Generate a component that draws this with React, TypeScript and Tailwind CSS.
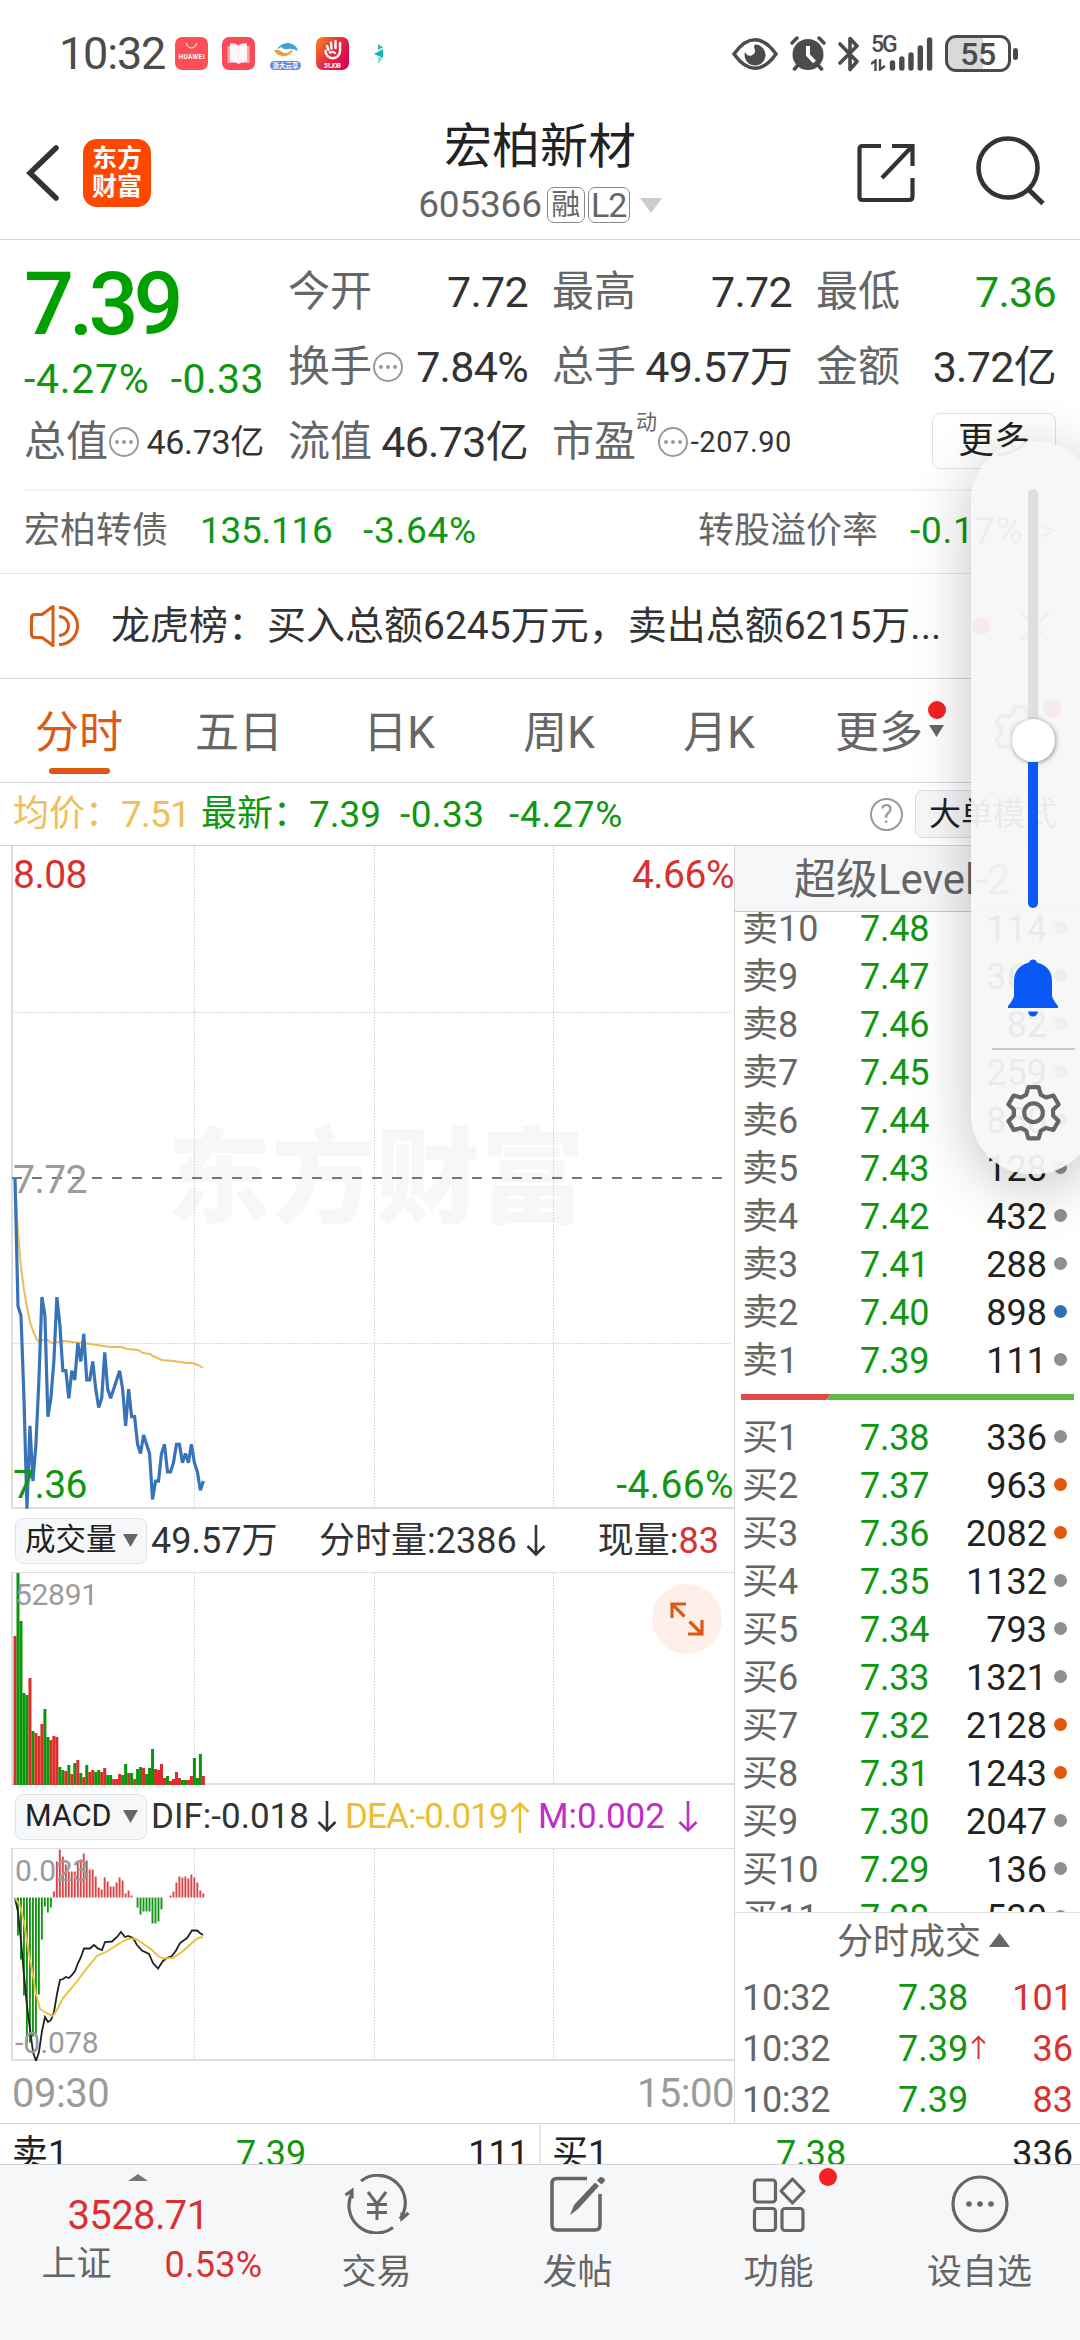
import React from 'react';

type Tone = 'gray' | 'blue' | 'orange';

interface OrderLevel {
  label: string;
  price: string;
  volume: string;
  tone: Tone;
}

const SELL_LEVELS: OrderLevel[] = [
  { label: '卖10', price: '7.48', volume: '114', tone: 'gray' },
  { label: '卖9', price: '7.47', volume: '368', tone: 'blue' },
  { label: '卖8', price: '7.46', volume: '82', tone: 'gray' },
  { label: '卖7', price: '7.45', volume: '259', tone: 'gray' },
  { label: '卖6', price: '7.44', volume: '850', tone: 'blue' },
  { label: '卖5', price: '7.43', volume: '128', tone: 'gray' },
  { label: '卖4', price: '7.42', volume: '432', tone: 'gray' },
  { label: '卖3', price: '7.41', volume: '288', tone: 'gray' },
  { label: '卖2', price: '7.40', volume: '898', tone: 'blue' },
  { label: '卖1', price: '7.39', volume: '111', tone: 'gray' },
];

const BUY_LEVELS: OrderLevel[] = [
  { label: '买1', price: '7.38', volume: '336', tone: 'gray' },
  { label: '买2', price: '7.37', volume: '963', tone: 'orange' },
  { label: '买3', price: '7.36', volume: '2082', tone: 'orange' },
  { label: '买4', price: '7.35', volume: '1132', tone: 'gray' },
  { label: '买5', price: '7.34', volume: '793', tone: 'gray' },
  { label: '买6', price: '7.33', volume: '1321', tone: 'gray' },
  { label: '买7', price: '7.32', volume: '2128', tone: 'orange' },
  { label: '买8', price: '7.31', volume: '1243', tone: 'orange' },
  { label: '买9', price: '7.30', volume: '2047', tone: 'gray' },
  { label: '买10', price: '7.29', volume: '136', tone: 'gray' },
  { label: '买11', price: '7.28', volume: '530', tone: 'gray' },
];

const TRADES = [
  { time: '10:32', price: '7.38', volume: '101', up: false },
  { time: '10:32', price: '7.39', volume: '36', up: true },
  { time: '10:32', price: '7.39', volume: '83', up: false },
];

const DOT: Record<Tone, string> = {
  gray: 'bg-[#8f8e94]',
  blue: 'bg-[#2f6fba]',
  orange: 'bg-[#e2570f]',
};

// one entry per minute since 09:30
const PRICES = [
  7.72, 7.58, 7.57, 7.48, 7.36, 7.45, 7.39, 7.43, 7.5, 7.59, 7.57, 7.46, 7.48, 7.52, 7.59, 7.56,
  7.51, 7.51, 7.48, 7.51, 7.5, 7.54, 7.52, 7.55, 7.5, 7.5, 7.52, 7.49, 7.47, 7.48, 7.53, 7.49,
  7.48, 7.49, 7.5, 7.51, 7.49, 7.45, 7.49, 7.46, 7.46, 7.43, 7.42, 7.44, 7.43, 7.42, 7.37, 7.39,
  7.39, 7.42, 7.43, 7.4, 7.4, 7.41, 7.43, 7.43, 7.41, 7.42, 7.41, 7.43, 7.41, 7.4, 7.38, 7.39,
];

const VOLUMES = [
  149, 212, 164, 92, 90, 107, 54, 52, 49, 61, 76, 48, 45, 49, 48, 18, 15, 14, 20, 11, 22, 25, 12, 8,
  20, 13, 15, 13, 15, 13, 17, 10, 10, 6, 6, 11, 10, 21, 12, 12, 6, 16, 18, 17, 11, 17, 36, 16, 15,
  21, 7, 9, 4, 6, 13, 7, 5, 5, 5, 9, 27, 7, 31, 9,
];
const VOLUME_SIDES = 'RGGGGRGRRRGGRRRGGRGRGRGRGRRGGRRGGRRRGGRGRGGRGGGRRRRGRRRRGGRRGGGR';

const MACD = [
  0, -38, -62, -98, -146, -145, -139, -139, -97, -42, -9, -15, -10, 6, 36, 48, 41, 33, 26, 26, 26,
  35, 38, 44, 37, 28, 28, 21, 10, 8, 20, 16, 11, 11, 15, 20, 17, 4, 7, 2, 0, -10, -17, -14, -14,
  -14, -26, -26, -24, -12, 0, 0, 2, 6, 15, 21, 20, 21, 19, 23, 20, 15, 7, 4,
];

const AVG_POINTS =
  '3,331 6,387 9,421 12,444 15,461 18,476 21,485 24,492 27,496 31,494 34,493 40,497 51,495 71,497 85,499 98,501 110,501 115,503 126,504 131,507 138,508 141,510 150,514 161,515 175,517 180,517 186,519 191,522';
const DIF_POINTS =
  '3,49 6,63 9,92 12,126 15,157 18,180 21,203 24,212 27,203 30,182 33,168 36,173 39,171 42,163 45,145 48,131 51,130 54,128 57,129 60,126 63,122 66,114 69,108 72,99.5 78,99.5 82,96 86,99.5 90,101 93,93 100,92.5 105,88 109,83 113,88 116,87 121,89 125,96 130,101.5 137,105 141,114 146,119.5 151,112 155,109 160,107 164,101.5 168,94 175,89 180,81.5 185,81.5 188,84 191,86';
const DEA_POINTS =
  '3,49 8,57 12,73 15,92 18,111 21,126 24,145 28,160 35,164.5 41,167 46,159 51,149 58,141 66,131 75,119 85,107 95,102.5 108,94 116,90 123,89.5 131,94.5 140,101 146,107 151,109.5 161,109 171,102 181,93 186,89 191,88';

const minuteX = (i: number) => 3 + i * 2.99;

/* ---------- small icons ---------- */

const Caret: React.FC<{ className?: string; up?: boolean }> = ({ className, up }) => (
  <svg viewBox="0 0 14 10" preserveAspectRatio="none" className={className} fill="currentColor">
    <path d={up ? 'M7 0 14 10H0z' : 'M0 0h14L7 10z'} />
  </svg>
);

const Arrow: React.FC<{ className?: string; up?: boolean }> = ({ className = '', up }) => (
  <svg viewBox="0 0 20 32" className={`shrink-0 ${className} ${up ? 'rotate-180' : ''}`} fill="none" stroke="currentColor" strokeWidth="2.6">
    <path d="M10 0v29M1.5 21l8.5 8.5 8.5-8.5" />
  </svg>
);

const MoreDots: React.FC = () => (
  <svg viewBox="0 0 32 32" className="h-8 w-8 shrink-0">
    <circle cx="16" cy="16" r="14" fill="none" stroke="#999" strokeWidth="2" />
    <circle cx="9" cy="16" r="2" fill="#999" />
    <circle cx="16" cy="16" r="2" fill="#999" />
    <circle cx="23" cy="16" r="2" fill="#999" />
  </svg>
);

const GEAR =
  'M22.5 3h10l2 7.2 5 2.8 7.2-1.9 5 8.6-5.3 5.2v5.6l5.3 5.2-5 8.6-7.2-1.9-5 2.8-2 7.2h-10l-2-7.2-5-2.8-7.2 1.9-5-8.6 5.3-5.2v-5.6l-5.3-5.2 5-8.6 7.2 1.9 5-2.8z';

const Gear: React.FC<{ className?: string }> = ({ className }) => (
  <svg viewBox="0 0 55 55" className={className} fill="none" stroke="currentColor" strokeWidth="4" strokeLinejoin="round">
    <path d={GEAR} />
    <circle cx="27.5" cy="27.7" r="9" />
  </svg>
);

/* ---------- status bar ---------- */

const StatusBar: React.FC = () => (
  <div className="flex h-[108px] items-center pl-[59px] text-[#4b4b4b]">
    <span className="w-[116px] text-[45px] leading-none tracking-[-1.2px]">10:32</span>
    <svg viewBox="0 0 33 33" className="h-[33px] w-[33px]">
      <rect width="33" height="33" rx="7" fill="#fc5058" />
      <path d="M11.5 6a5 5 0 0 0 10 0" fill="none" stroke="#fff" strokeWidth="1" />
      <text x="16.5" y="22" fontSize="6.4" fontWeight="700" textAnchor="middle" fill="#fff" textLength="26">HUAWEI</text>
    </svg>
    <svg viewBox="0 0 33 33" className="ml-[14px] h-[33px] w-[33px]">
      <rect width="33" height="33" rx="7" fill="#fb4a56" />
      <path d="M5.5 9H16v17H5.5zM17 9h10.5v17H17z" fill="#fda5ab" />
      <path d="M8 6.500q5-1 8.500 2 3.500-3 8.500-2v18q-5-.5-8.500 2.500-3.500-3-8.500-2.500z" fill="#fff" opacity=".9" />
    </svg>
    <svg viewBox="0 0 33 33" className="ml-[14px] h-[33px] w-[33px]">
      <path d="M8 12Q13 5 20 6q8 2 9 8-6-3-10-2-4 1-7-2-2 2-4 2z" fill="#3ea5d0" />
      <path d="M5 13q5-1 8 2 4 2 7 0 2-2 4-2-3 7-11 6-6-1-8-6z" fill="#e8a33a" />
      <rect x="1" y="24" width="31" height="9" rx="4.5" fill="#5f8be0" />
      <text x="16.5" y="31" fontSize="6.5" fontWeight="700" textAnchor="middle" fill="#fff">浙大云享</text>
    </svg>
    <svg viewBox="0 0 33 33" className="ml-[14px] h-[33px] w-[33px]">
      <defs>
        <linearGradient id="job" x1="0" y1="0" x2="1" y2="0.7">
          <stop offset="0" stopColor="#f58a1f" />
          <stop offset="0.5" stopColor="#e8303c" />
          <stop offset="1" stopColor="#dc0055" />
        </linearGradient>
      </defs>
      <rect width="33" height="33" rx="7" fill="url(#job)" />
      <path d="M9.5 14a7.2 7.2 0 1 0 14.500 0V6M11 9l1.500 4M15 5.500l.5 6M19.500 4v7M14 15.500q3-1.500 5 .5" fill="none" stroke="#fff" strokeWidth="2.4" strokeLinecap="round" />
      <text x="16.5" y="31" fontSize="6.5" fontWeight="700" textAnchor="middle" fill="#fff" textLength="17">51JOB</text>
    </svg>
    <svg viewBox="0 0 10 20" className="ml-[25px] h-5 w-[10px]">
      <path d="M4 0l5 3.5L4 6z" fill="#2bb5b0" />
      <path d="M9 5v9L0 10z" fill="#19b3b3" />
      <path d="M4 12.5l5 2-5 5z" fill="#8ed8d4" />
    </svg>

    <svg viewBox="0 0 46 32" className="ml-[348px] h-8 w-[46px]">
      <path d="M2 16Q12 1.8 23 1.8T44 16Q34 30.2 23 30.2T2 16z" fill="none" stroke="#4b4b4b" strokeWidth="3.5" />
      <path d="M23 6.5a10.5 10.5 0 1 1-10 7.5q2 4.500 6.500 3.500 5-2 3-7-1-2.500.5-4z" fill="#4b4b4b" />
    </svg>
    <svg viewBox="0 0 36 35" className="ml-3 h-[35px] w-9">
      <circle cx="18" cy="18.5" r="15.5" fill="#4b4b4b" />
      <path d="M2 7l5-5M34 7l-5-5M4.500 33l4-4.500M31.500 33l-4-4.500" stroke="#4b4b4b" strokeWidth="3.5" strokeLinecap="round" />
      <path d="M18 10v9l6.500 7" fill="none" stroke="#fff" strokeWidth="4" />
    </svg>
    <svg viewBox="0 0 22 36" className="ml-3 h-9 w-[22px]" fill="none" stroke="#4b4b4b" strokeWidth="3.6" strokeLinecap="round" strokeLinejoin="round">
      <path d="M2 8l17 17.5L12 33.5V2.5l7 7.5L2 27" />
    </svg>
    <div className="ml-[11px] flex h-[35px] w-[64px] items-end">
      <div className="flex w-[18px] flex-col">
        <span className="text-[23px] font-medium leading-[18px] tracking-[-2px]">5G</span>
        <svg viewBox="0 0 15 12" className="mt-[5px] h-3 w-[15px]" fill="none" stroke="#4b4b4b" strokeWidth="2.4">
          <path d="M0 5l4.5-3.5V12M9 0v10.500L14 7" />
        </svg>
      </div>
      <svg viewBox="0 0 46 35" className="h-[35px] w-[46px]" stroke="#4b4b4b" strokeWidth="5.4" strokeLinecap="round">
        <path d="M3.5 27v5M12.8 23v9M22 19v13M31.3 12v20M40.6 4v28" />
      </svg>
    </div>
    <div className="ml-[10px] flex items-center">
      <div className="flex h-[37px] w-[66px] items-center justify-center rounded-[11px] border-[3px] border-[#4b4b4b] bg-linear-to-r from-[#d9d9d9] from-59% to-white to-59% text-[32px] font-medium leading-none tracking-[-0.5px]">
        55
      </div>
      <div className="ml-0.5 h-3 w-[5px] rounded-full bg-[#4b4b4b]" />
    </div>
  </div>
);

/* ---------- title bar ---------- */

const TitleBar: React.FC = () => (
  <header className="flex h-[132px] items-center border-b-[1.5px] border-[#d4d4d4] pb-1">
    <svg viewBox="0 0 34 58" className="ml-[26px] mt-1 h-[58px] w-[34px]" fill="none" stroke="#333" strokeWidth="5.5" strokeLinecap="round">
      <path d="M30 4L4 29l26 25" />
    </svg>
    <div className="ml-[23px] mt-1 flex h-[68px] w-[68px] flex-col items-center justify-center rounded-[14px] bg-[#ff4700] text-[25px] font-bold leading-[28px] text-white">
      <span>东方</span>
      <span>财富</span>
    </div>
    <div className="flex w-[706px] flex-col items-center pl-[72px]">
      <h1 className="text-[48px] leading-[56px] text-[#222]">宏柏新材</h1>
      <div className="mt-[12px] flex items-center text-[#666]">
        <span className="text-[37px] leading-9 tracking-[-0.2px]">605366</span>
        <span className="ml-[5px] flex h-9 w-[38px] items-center justify-center rounded-[7px] border border-[#888] text-[29px] leading-none">融</span>
        <span className="ml-[3px] flex h-9 w-[42px] items-center justify-center rounded-[7px] border border-[#888] text-[34px] leading-none tracking-[-1px]">L2</span>
        <Caret className="ml-[10px] h-[15px] w-[22px] text-[#ccc]" />
      </div>
    </div>
    <svg viewBox="0 0 58 60" className="mt-1 h-[60px] w-[58px] shrink-0" fill="none" stroke="#333" strokeWidth="4.2">
      <path d="M24 3H5.500Q2.500 3 2.500 6v48q0 3 3 3H52q3.500 0 3.500-3.500V35M35 3h20.500v20M55 3.500L25 35" />
    </svg>
    <svg viewBox="0 0 70 70" className="ml-[61px] h-[70px] w-[70px] shrink-0" fill="none" stroke="#333" strokeWidth="4.6">
      <circle cx="32" cy="32" r="29.5" />
      <path d="M53 54l14 13.5" strokeWidth="5" />
    </svg>
  </header>
);

/* ---------- quote ---------- */

const Cell: React.FC<{ label: string; dots?: boolean; children: React.ReactNode }> = ({ label, dots, children }) => (
  <div className="flex h-[75px] items-center justify-between">
    <span className="flex items-center text-[42px] text-[#666]">
      {label}
      {dots && <MoreDots />}
    </span>
    {children}
  </div>
);

const Value: React.FC<{ className?: string; children: React.ReactNode }> = ({ className = 'text-[#333]', children }) => (
  <span className={`whitespace-nowrap text-[43px] tracking-[-0.7px] ${className}`}>{children}</span>
);

const Quote: React.FC = () => (
  <section className="h-[335px] border-b-[1.5px] border-[#e6e6e6]">
    <div className="ml-6 flex h-[251px] gap-6 border-b-2 border-[#f3f3f3] leading-none">
      <div className="w-60 pt-2">
        <div className="flex h-[112px] items-center text-[88px] font-medium tracking-[-5px] text-[#00a000]">7.39</div>
        <div className="flex h-10 items-center justify-between text-[41px] text-[#109610]">
          <span className="tracking-[0.7px]">-4.27%</span>
          <span className="tracking-[0.4px]">-0.33</span>
        </div>
        <div className="flex h-[84px] items-center text-[42px] text-[#666]">
          总值
          <MoreDots />
          <span className="ml-auto text-[34px] tracking-[-0.3px] text-[#333]">46.73亿</span>
        </div>
      </div>
      <div className="w-60 pt-[15px]">
        <Cell label="今开"><Value>7.72</Value></Cell>
        <Cell label="换手" dots><Value>7.84%</Value></Cell>
        <Cell label="流值"><Value>46.73亿</Value></Cell>
      </div>
      <div className="w-60 pt-[15px]">
        <Cell label="最高"><Value>7.72</Value></Cell>
        <Cell label="总手"><Value>49.57万</Value></Cell>
        <div className="flex h-[75px] items-center text-[42px] text-[#666]">
          市盈
          <span className="mb-10 text-[21px]">动</span>
          <MoreDots />
          <span className="ml-auto text-[29px] tracking-[0.6px] text-[#333]">-207.90</span>
        </div>
      </div>
      <div className="w-60 pt-[15px]">
        <Cell label="最低"><Value className="text-[#109610]">7.36</Value></Cell>
        <Cell label="金额"><Value>3.72亿</Value></Cell>
        <div className="flex h-[72px] items-center justify-end">
          <span className="flex h-14 w-[124px] items-center justify-center rounded-lg border-[1.5px] border-[#dfe1e5] text-[36px] text-[#222]">更多</span>
        </div>
      </div>
    </div>
    <div className="flex h-[80px] items-center px-6 text-[36px] leading-none text-[#666]">
      <span>宏柏转债</span>
      <span className="ml-8 w-[163px] text-[37px] tracking-[-0.3px] text-[#109610]">135.116</span>
      <span className="text-[37px] tracking-[0.7px] text-[#109610]">-3.64%</span>
      <span className="ml-auto">转股溢价率</span>
      <span className="ml-8 w-[126px] text-[37px] tracking-[0.7px] text-[#109610]">-0.17%</span>
      <svg viewBox="0 0 20 20" className="h-5 w-5" fill="none" stroke="#888" strokeWidth="2">
        <path d="M2 3l16 7-16 7" />
      </svg>
    </div>
  </section>
);

const Notice: React.FC = () => (
  <section className="flex h-[105px] items-center border-b-[1.5px] border-[#d4d4d4] pl-[29px]">
    <svg viewBox="0 0 52 44" className="h-11 w-[52px]" fill="none" stroke="#dc5a17" strokeWidth="3">
      <path d="M24 2.500v39l-11-8H6Q2.500 33.500 2.500 30V14q0-3.500 3.500-3.500h7z" strokeLinejoin="round" />
      <path d="M30 3.5a18.5 18.5 0 0 1 0 37M30 12.500a9.5 9.5 0 0 1 0 19" />
    </svg>
    <p className="ml-[30px] w-[861px] whitespace-nowrap text-[39px] leading-none text-[#333]">
      龙虎榜：买入总额6245万元，卖出总额6215万...
    </p>
    <span className="h-[18px] w-[18px] rounded-full bg-[#f22222]" />
    <svg viewBox="0 0 30 30" className="ml-[30px] h-[30px] w-[30px]" stroke="#888" strokeWidth="2.5">
      <path d="M1 1l28 28M29 1L1 29" />
    </svg>
  </section>
);

const TABS = ['分时', '五日', '日K', '周K', '月K', '更多'];

const Tabs: React.FC = () => (
  <nav className="-ml-px flex h-[104px] items-center border-b-[1.5px] border-[#d4d4d4] text-[44px] leading-none text-[#666]">
    {TABS.map((tab, i) => (
      <div key={tab} className={`relative flex h-full w-[160px] shrink-0 items-center justify-center pt-1 ${i === 0 ? 'text-[#dc5a17]' : ''}`}>
        {tab}
        {i === 0 && <span className="absolute bottom-2 left-[50px] h-1.5 w-[61px] rounded-full bg-[#e2570f]" />}
        {tab === '更多' && (
          <>
            <span className="absolute right-[13px] top-[22px] h-[18px] w-[18px] rounded-full bg-[#f22222]" />
            <Caret className="absolute right-[15px] top-[46px] h-3 w-[15px]" />
          </>
        )}
      </div>
    ))}
    <div className="relative ml-[34px]">
      <Gear className="h-[54px] w-[54px]" />
      <span className="absolute -right-[14px] -top-1 h-[18px] w-[18px] rounded-full bg-[#f22222]" />
    </div>
  </nav>
);

const InfoRow: React.FC = () => (
  <section className="flex h-[63px] items-center whitespace-nowrap border-b-[1.5px] border-[#d4d4d4] pl-[13px] text-[36px] leading-none">
    <span className="w-[108px] text-[#efbe59]">均价：</span>
    <span className="w-[80px] text-[37px] tracking-[-0.8px] text-[#efbe59]">7.51</span>
    <span className="w-[108px] text-[#109610]">最新：</span>
    <span className="w-[91px] text-[37px] text-[#109610]">7.39</span>
    <span className="w-[109px] text-[37px] tracking-[0.4px] text-[#109610]">-0.33</span>
    <span className="w-[361px] text-[37px] tracking-[0.8px] text-[#109610]">-4.27%</span>
    <span className="flex h-[33px] w-[33px] items-center justify-center rounded-full border-[2.5px] border-[#999] text-[26px] text-[#999]">?</span>
    <span className="ml-3 flex h-12 w-[156px] items-center justify-center rounded-lg border-[1.5px] border-[#dadde2] bg-[#f6f7f9] text-[32px] text-[#222]">大单模式</span>
  </section>
);

/* ---------- charts ---------- */

const GridLines: React.FC<{ height: number; rows?: number[] }> = ({ height, rows = [] }) => (
  <g stroke="#cfcfcf" strokeWidth="1" strokeDasharray="1.5 1.5">
    {[182.5, 362.5, 541.5].map((x) => (
      <path key={x} d={`M${x} 0V${height}`} />
    ))}
    {rows.map((y) => (
      <path key={y} d={`M0 ${y}H720`} />
    ))}
  </g>
);

const PriceChart: React.FC = () => {
  const points = PRICES.map((p, i) => `${minuteX(i)},${(331.5 + (7.72 - p) * 920).toFixed(1)}`).join(' ');
  return (
    <div className="relative ml-[11px] h-[663px] border-b-2 border-l-2 border-[#dedede] text-[39px] leading-none tracking-[-0.5px]">
      <div className="absolute left-[154px] top-[282px] whitespace-nowrap text-[104px] font-black tracking-[0.5px] text-[#f7f7f7]">东方财富</div>
      <svg viewBox="0 0 722 663" className="absolute -left-px top-0 h-[663px] w-[722px]" fill="none">
        <GridLines height={663} rows={[166.5, 497.5]} />
        <path d="M0 332H720" stroke="#777" strokeWidth="1.8" strokeDasharray="10 10" />
      </svg>
      <span className="absolute left-0 top-[315px] text-[#9b9b9b]">7.72</span>
      <svg viewBox="0 0 722 663" className="absolute -left-px top-0 h-[663px] w-[722px]" fill="none">
        <polyline points={AVG_POINTS} stroke="#ecbb5c" strokeWidth="2" />
        <polyline points={points} stroke="#3873b7" strokeWidth="3.2" strokeLinejoin="miter" strokeMiterlimit="2" />
      </svg>
      <span className="absolute left-0 top-[10px] text-[#d93030]">8.08</span>
      <span className="absolute right-0 top-[10px] text-[#d93030]">4.66%</span>
      <span className="absolute left-0 top-[620px] text-[#109610]">7.36</span>
      <span className="absolute right-0 top-[620px] tracking-[0.4px] text-[#109610]">-4.66%</span>
    </div>
  );
};

const IndicatorButton: React.FC<{ label: string }> = ({ label }) => (
  <span className="flex h-[46px] w-[132px] items-center justify-between rounded-lg border border-[#e0e3e8] bg-[#f6f7f9] pl-[9px] pr-2 text-[30.5px] text-[#222]">
    {label}
    <Caret className="h-[13px] w-[15px] text-[#666]" />
  </span>
);

const VolumeChart: React.FC = () => (
  <div className="relative ml-[11px] h-[213px] border-b-2 border-l-2 border-t border-[#dedede]">
    <svg viewBox="0 0 722 212" className="absolute -left-px top-0 h-[212px] w-[722px]">
      <GridLines height={212} />
      {VOLUMES.map((v, i) => (
        <rect key={i} x={minuteX(i) - 1.5} y={212 - v} width="3" height={v} fill={VOLUME_SIDES[i] === 'R' ? '#dc2c2c' : '#0a960a'} />
      ))}
    </svg>
    <span className="absolute left-0.5 top-[6px] text-[30px] leading-8 tracking-[-0.3px] text-[#9b9b9b]">52891</span>
    <span className="absolute right-[12px] top-[11px] flex h-[70px] w-[70px] items-center justify-center rounded-full bg-[#fef0e9]">
      <svg viewBox="0 0 34 34" className="h-[34px] w-[34px]" fill="none" stroke="#dc5a17" strokeWidth="3.2">
        <path d="M16 2H2v14M2.500 2.500l12 12M18 32h14V18M31.500 31.500l-12-12" />
      </svg>
    </span>
  </div>
);

const MacdChart: React.FC = () => (
  <div className="relative ml-[11px] h-[213px] border-b-2 border-l-2 border-t border-[#dedede]">
    <svg viewBox="0 0 722 212" className="absolute -left-px top-0 h-[212px] w-[722px]" fill="none">
      <GridLines height={212} />
      {MACD.map((v, i) => (
        <rect key={i} x={minuteX(i) - 1} y={v > 0 ? 48.5 - v : 48.5} width="1.9" height={Math.abs(v)} fill={v > 0 ? '#d94545' : '#139413'} />
      ))}
      <polyline points={DIF_POINTS} stroke="#222" strokeWidth="1.8" />
      <polyline points={DEA_POINTS} stroke="#e8c03a" strokeWidth="1.9" />
    </svg>
    <span className="absolute left-0.5 top-[6px] text-[30px] leading-8 tracking-[-0.3px] text-[#9b9b9b]">0.023</span>
    <span className="absolute left-0.5 top-[178px] text-[30px] leading-8 text-[#9b9b9b]">-0.078</span>
  </div>
);

const Charts: React.FC = () => (
  <div className="w-[735px] shrink-0 border-r-[1.5px] border-[#d4d4d4]">
    <PriceChart />
    <div className="flex h-[63px] items-center whitespace-nowrap pl-[15px] text-[36px] leading-none text-[#333]">
      <IndicatorButton label="成交量" />
      <span className="ml-1 w-[168px]">49.57万</span>
      <span>分时量:2386</span>
      <Arrow className="ml-[9px] h-8 w-5" />
      <span className="ml-auto">现量:</span>
      <span className="mr-[15px] text-[#d93030]">83</span>
    </div>
    <VolumeChart />
    <div className="flex h-[63px] items-center whitespace-nowrap pl-[15px] text-[35px] leading-none text-[#333]">
      <IndicatorButton label="MACD" />
      <span className="ml-1 flex w-[194px] items-center justify-between pr-2">DIF:-0.018<Arrow className="h-8 w-5" /></span>
      <span className="flex w-[191px] items-center justify-between pr-1.5 tracking-[-0.9px] text-[#e9bf2d]">DEA:-0.019<Arrow up className="h-8 w-5" /></span>
      <span className="ml-0.5 flex w-[160px] items-center justify-between text-[#c02fc4]">M:0.002<Arrow className="h-8 w-5" /></span>
    </div>
    <MacdChart />
    <div className="flex h-[62px] items-center justify-between pl-3 pt-[3px] text-[40px] leading-none tracking-[-0.5px] text-[#9b9b9b]">
      <span>09:30</span>
      <span>15:00</span>
    </div>
  </div>
);

/* ---------- order book ---------- */

const OrderRow: React.FC<{ level: OrderLevel }> = ({ level }) => (
  <div className="flex h-12 items-center text-[35px] leading-none">
    <span className="w-[125px] pl-[7px] text-[36px] text-[#666]">{level.label}</span>
    <span className="w-[90px] text-[36px] tracking-[-0.2px] text-[#109610]">{level.price}</span>
    <span className="w-[97px] text-right text-[36px] text-[#222]">{level.volume}</span>
    <span className={`mb-1 ml-[7px] h-[13px] w-[13px] rounded-full ${DOT[level.tone]}`} />
  </div>
);

const OrderBook: React.FC = () => (
  <div className="flex w-[345px] flex-col">
    <div className="h-[66px] border-b-[1.5px] border-[#ccc] bg-[#f6f7f9] pl-[59px] text-[42px] leading-[68px] text-[#666]">超级Level-2</div>
    <div className="h-[1001px] overflow-hidden">
      <div className="-mt-[7px]">
        {SELL_LEVELS.map((level) => (
          <OrderRow key={level.label} level={level} />
        ))}
      </div>
      <svg viewBox="0 0 333 6" className="mb-[14px] ml-1.5 mt-[9px] h-1.5 w-[333px]">
        <path d="M0 0h90l-5 6H0z" fill="#e04a4a" />
        <path d="M90 0h243v6H85z" fill="#5fb84c" />
      </svg>
      {BUY_LEVELS.map((level) => (
        <OrderRow key={level.label} level={level} />
      ))}
    </div>
    <div className="flex h-[58px] items-center border-t border-[#ddd] pl-[102px] text-[36px] leading-none text-[#666]">
      分时成交
      <Caret up className="mb-1 ml-[8px] h-[14px] w-[21px]" />
    </div>
    {TRADES.map((trade, i) => (
      <div key={i} className="flex h-[51px] items-center pt-1 text-[36px] leading-none">
        <span className="w-[163px] pl-[7px] tracking-[-0.3px] text-[#666]">{trade.time}</span>
        <span className="text-[#109610]">{trade.price}</span>
        {trade.up && <Arrow up className="mb-1 ml-[3px] h-6 w-[15px] text-[#d93030]" />}
        <span className="ml-auto pr-[7px] text-[#d93030]">{trade.volume}</span>
      </div>
    ))}
  </div>
);

const BestPrices: React.FC = () => (
  <section className="flex h-[41px] overflow-hidden border-t-[1.5px] border-[#d4d4d4] text-[36px] leading-[60px]">
    <div className="flex w-[541px] border-r-2 border-[#e8e8e8] pl-3 pr-[10px]">
      <span className="w-[224px] text-[#222]">卖1</span>
      <span className="text-[#109610]">7.39</span>
      <span className="ml-auto text-[#222]">111</span>
    </div>
    <div className="flex flex-1 pl-[11px] pr-[7px]">
      <span className="w-[224px] text-[#222]">买1</span>
      <span className="text-[#109610]">7.38</span>
      <span className="ml-auto text-[#222]">336</span>
    </div>
  </section>
);

/* ---------- bottom nav ---------- */

const NavItem: React.FC<{ label: string; dot?: boolean; children: React.ReactNode }> = ({ label, dot, children }) => (
  <div className="relative flex w-[201px] flex-col items-center pt-[9px] text-[35px] leading-none text-[#666]">
    <svg viewBox="0 0 66 60" className="h-[60px] w-[66px]" fill="none" stroke="#666" strokeWidth="3.2">
      {children}
    </svg>
    <span className="mt-[21px]">{label}</span>
    {dot && <span className="absolute right-[42px] top-[3px] h-[18px] w-[18px] rounded-full bg-[#f22222]" />}
  </div>
);

const BottomNav: React.FC = () => (
  <footer className="flex h-[176px] border-t-[1.5px] border-[#d4d4d4] bg-[#f6f7f9]">
    <div className="flex w-[276px] flex-col items-center leading-none">
      <Caret up className="mt-[9px] h-[7px] w-5 text-[#777]" />
      <span className="mt-[15px] text-[40px] tracking-[-0.6px] text-[#d93030]">3528.71</span>
      <div className="ml-[28px] mt-[11px] flex gap-[53px] text-[36px]">
        <span className="text-[35px] text-[#666]">上证</span>
        <span className="tracking-[0.3px] text-[#d93030]">0.53%</span>
      </div>
    </div>
    <NavItem label="交易">
      <path d="M17 7a27.5 27.5 0 0 1 39 38M49 53.5A27.5 27.5 0 0 1 8 19M1.5 21L8 16.500v8M64.500 39L58 44.500v-6" />
      <path d="M24 18l9 12 9-12M33 30v16M23 30.500h20M23 38.500h20" strokeWidth="3" />
    </NavItem>
    <NavItem label="发帖">
      <path d="M42 4.500H12Q7 4.500 7 9.500V51q0 5 5 5h38q5 0 5-5V20" strokeWidth="3.5" />
      <path d="M25 41l4-10L50 8.500l4 3.500L33 35z" fill="#666" stroke="none" />
      <path d="M52 6.500l3-3.500q5 0 5 4l-3.500 3.500z" fill="#666" stroke="none" />
    </NavItem>
    <NavItem label="功能" dot>
      <rect x="8.5" y="6" width="21" height="22" rx="3" />
      <rect x="8.5" y="34.5" width="21" height="22" rx="3" />
      <rect x="36" y="34.5" width="21" height="22" rx="3" />
      <path d="M46.500 5L58 17 46.500 29 35 17z" strokeLinejoin="round" />
    </NavItem>
    <NavItem label="设自选">
      <circle cx="33" cy="30" r="27" />
      <g fill="#666" stroke="none">
        <circle cx="22" cy="30" r="2.8" />
        <circle cx="33" cy="30" r="2.8" />
        <circle cx="44" cy="30" r="2.8" />
      </g>
    </NavItem>
  </footer>
);

/* ---------- system volume slider, floats above the page ---------- */

const VolumePanel: React.FC = () => (
  <aside className="absolute left-[971px] top-[441px] flex h-[733px] w-[124px] flex-col items-center rounded-[60px] bg-[#f7f7f7]/94 pt-12 shadow-[0_12px_60px_rgba(0,0,0,0.24)]">
    <div className="flex h-[419px] w-[43px] flex-col items-center">
      <div className="h-[230px] w-[10px] rounded-t-full bg-[#dfdfdf]" />
      <div className="h-[43px] w-[43px] shrink-0 rounded-full bg-white shadow-[1px_1px_5px_rgba(0,0,0,0.4)]" />
      <div className="w-[10px] flex-1 rounded-b-full bg-[#0a59f7]" />
    </div>
    <svg viewBox="0 0 50 58" className="mt-[51px] h-[58px] w-[50px]" fill="#0a59f7">
      <path d="M21 3.500Q22 .5 25 .5t4 3q15 4 15 19V37q1 4 6 10v2H0v-2q5-6 6-10V22.500q0-15 15-19zM20 52.500h10q-1 5-5 5t-5-5z" />
    </svg>
    <div className="mt-[31px] h-[2px] w-[83px] bg-[#c9c9c9]" />
    <Gear className="mt-[34px] h-[57px] w-[57px] text-[#666]" />
  </aside>
);

export default function App() {
  return (
    <div className="relative flex h-[2340px] w-[1080px] flex-col overflow-hidden bg-white font-[Roboto,'Noto_Sans_CJK_SC',sans-serif]">
      <StatusBar />
      <TitleBar />
      <Quote />
      <Notice />
      <Tabs />
      <InfoRow />
      <main className="flex h-[1277px]">
        <Charts />
        <OrderBook />
      </main>
      <BestPrices />
      <BottomNav />
      <VolumePanel />
    </div>
  );
}
